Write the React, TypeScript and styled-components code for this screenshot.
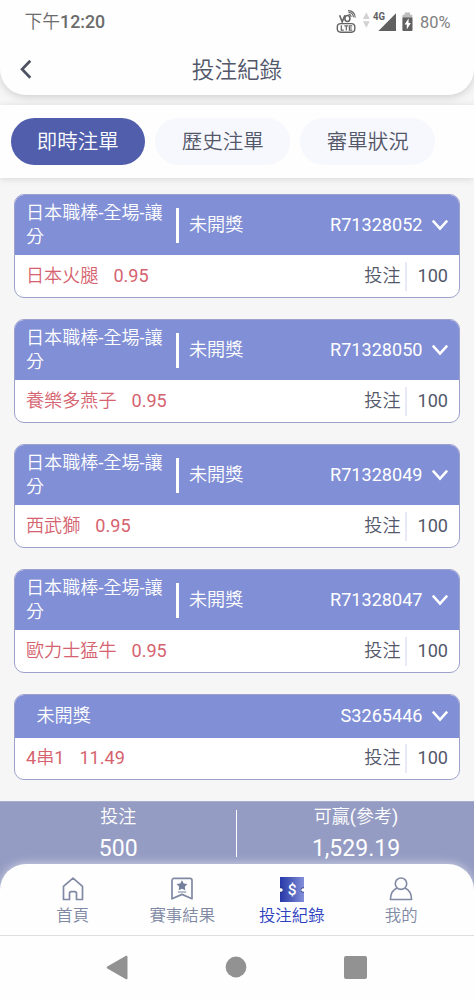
import React from 'react';
import styled, { createGlobalStyle } from 'styled-components';

const GlobalStyle = createGlobalStyle`
  * { box-sizing: border-box; }
  body {
    margin: 0;
    background: #f6f6f6;
    font-family: Roboto, 'Noto Sans CJK TC DemiLight', 'Noto Sans CJK TC', sans-serif;
    color: #53576a;
  }
`;

const Screen = styled.div`
  width: 100%;
  height: 1000px;
  display: flex;
  flex-direction: column;
  overflow: hidden;
`;

const Header = styled.header`
  flex: none;
  height: 95px;
  background: #fefefe;
  border-radius: 0 0 26px 26px;
  box-shadow: 0 2px 9px rgba(0, 0, 0, 0.16);
`;

const StatusBar = styled.div`
  height: 44px;
  padding: 0 23px 0 24.5px;
  display: flex;
  align-items: center;
  justify-content: space-between;
  color: #6b6b6b;
  font-size: 17px;
`;

const Clock = styled.span`
  display: flex;
  align-items: center;
  color: #6b6b6b;
  font-size: 17.8px;
  line-height: 24px;
  font-weight: 500;
  span { font-weight: 400; padding-bottom: 1px; }
`;

const StatusIcons = styled.div`
  display: flex;
  align-items: center;
`;

const Battery = styled.span`
  width: 31px;
  margin-left: 7px;
  font-size: 16.4px;
  color: #808080;
`;

const TitleBar = styled.div`
  height: 51px;
  display: grid;
  grid-template-columns: 52px 1fr 52px;
  align-items: center;
`;

const BackButton = styled.button`
  border: 0;
  padding: 0 0 0 18px;
  background: none;
  display: flex;
`;

const Title = styled.h1`
  margin: 0;
  padding-top: 2px;
  text-align: center;
  font-size: 22.6px;
  line-height: 32px;
  font-weight: 400;
`;

const Tabs = styled.nav`
  flex: none;
  height: 73px;
  margin-top: 10px;
  padding: 0 10.5px;
  display: flex;
  align-items: center;
  gap: 10.3px;
  background: #fefefe;
  box-shadow: 0 1px 7px rgba(0, 0, 0, 0.13);
`;

const Tab = styled.button<{ $active?: boolean }>`
  width: 134.7px;
  height: 47px;
  padding: 0 0 4px 0;
  border: 0;
  border-radius: 24px;
  font: inherit;
  font-size: 20.5px;
  background: ${(p) => (p.$active ? '#505eac' : '#f7f8fd')};
  color: ${(p) => (p.$active ? '#fff' : '#53576a')};
`;

const List = styled.main`
  flex: none;
  height: 623px;
  padding: 16px 14px 0;
  display: flex;
  flex-direction: column;
  gap: 21px;
`;

const Card = styled.article`
  flex: none;
  overflow: hidden;
  border: 1.5px solid #9ca2cb;
  border-radius: 10px;
  background: #fff;
  font-size: 18.1px;
`;

const CardHead = styled.div<{ $compact?: boolean }>`
  height: ${(p) => (p.$compact ? '42.5px' : '60px')};
  padding: 0 10px 0 ${(p) => (p.$compact ? '21.5px' : '11px')};
  display: flex;
  align-items: center;
  background: #818fd6;
  color: #fff;
`;

const League = styled.div`
  width: 150px;
  height: 49px;
  padding-right: 11px;
  line-height: 24.8px;
`;

const HeadRule = styled.div`
  width: 3px;
  height: 35px;
  margin-right: 10px;
  background: #fff;
`;

const Label = styled.span`
  line-height: 26px;
  padding-bottom: 1px;
`;

const OrderNo = styled.span`
  margin-left: auto;
  margin-right: 8.5px;
  padding-bottom: 1px;
`;

const CardBody = styled.div<{ $compact?: boolean }>`
  height: ${(p) => (p.$compact ? '41px' : '42px')};
  padding: 0 11px;
  display: flex;
  align-items: center;
`;

const Pick = styled(Label)`
  color: #d5636f;
  margin-right: 15px;
`;

const Odds = styled.span`
  flex: 1;
  padding-bottom: 1px;
  color: #d5636f;
`;

const Stake = styled.span`
  height: 29px;
  margin-left: 5px;
  padding-left: 10px;
  border-left: 2px solid #e8e9f8;
  line-height: 27px;
`;

const Summary = styled.section`
  flex: none;
  height: 92px;
  display: grid;
  grid-template-columns: 235.5px 1.5px 1fr;
  background: #959cc3;
  border-top: 1px solid #a7adca;
  color: #fff;
  text-align: center;
`;

const SummaryRule = styled.div`
  height: 47px;
  margin-top: 7.5px;
  background: #fff;
`;

const SummaryLabel = styled.div`
  padding-left: 1px;
  font-size: 18px;
  line-height: 29px;
`;

const SummaryValue = styled.div`
  padding: 1px 0 0 1px;
  font-size: 23px;
  line-height: 34px;
`;

const BottomNav = styled.nav`
  flex: none;
  height: 72px;
  margin-top: -29px;
  padding: 0 18px;
  display: grid;
  grid-template-columns: repeat(4, 1fr);
  background: #fefefe;
  border-bottom: 1.5px solid #dedede;
  border-radius: 26px 26px 0 0;
  box-shadow: 0 -1px 9px rgba(255, 255, 255, 0.5);
`;

const NavItem = styled.a<{ $active?: boolean }>`
  padding-top: 12px;
  display: flex;
  flex-direction: column;
  align-items: center;
  color: ${(p) => (p.$active ? '#2b3fbf' : '#8089a4')};
  font-size: 16.4px;
  line-height: 24px;
  svg { margin-bottom: 2px; }
`;

const SystemNav = styled.div`
  flex: 1;
  display: flex;
  align-items: center;
  justify-content: space-between;
  padding: 0 107px 2px 106px;
  background: #fefefe;
`;

const Chevron = () => (
  <svg width="18" height="12" viewBox="0 0 18 12" fill="none" stroke="#fff" strokeWidth="2.5">
    <path d="M1.8 1.7 9 9.6l7.2-7.9" />
  </svg>
);

const StatusGlyphs = () => (
  <svg width="77" height="28" viewBox="336 8 77 28" fill="none">
    <path d="m339.6 15.2 2.6 6.6 2.7-6.6" stroke="#656565" strokeWidth="1.6" />
    <ellipse cx="347.4" cy="18.5" rx="2.5" ry="3" stroke="#656565" strokeWidth="1.6" />
    <path d="M348.6 14.1c1.5.3 2.4 1.2 2.7 2.7M348.5 12.3c2.9.3 4.7 2 5 4.9M348.1 10.6c4.2.2 6.9 2.7 7.2 7" stroke="#656565" strokeWidth="1.1" />
    <rect x="337.3" y="23.6" width="17.5" height="8.6" rx="3.4" stroke="#656565" strokeWidth="1.4" />
    <path d="M341.3 25.2v5h2.4M344.4 25.8h3.8m-1.9 0v4.8M352.2 25.8h-2.8v4.4h2.8M349.4 28h2.5" stroke="#656565" strokeWidth="1.2" />
    <path d="m366.3 12.3 3.4 6.7h-6.8zM366.3 27.7l3.4-6.5h-6.8z" fill="#d2d2d2" />
    <text x="373" y="20.4" fill="#606060" fontFamily="Roboto" fontSize="11.5" fontWeight="700" textLength="12" lengthAdjust="spacingAndGlyphs">4G</text>
    <path d="M396 13.3V31h-17.6z" fill="#606060" />
    <path d="M402.5 16v-1.2h2.2v-2.2h5.4v2.2h2.2V18h-9.8z" fill="#bdbdbd" />
    <path d="M402.4 17.6h10.1v12.5a1 1 0 0 1-1 1h-8.1a1 1 0 0 1-1-1z" fill="#606060" />
    <path d="m408.6 18.2-4 6.2h2.2v5l4-6.3h-2.2z" fill="#fff" />
  </svg>
);

const HomeIcon = () => (
  <svg width="24" height="26" viewBox="0 0 24 26" fill="none" stroke="#8089a4" strokeWidth="1.7" strokeLinejoin="round">
    <path d="M2.5 10.3 12 2.1l9.5 8.2v13.2h-6v-6.2c0-1-.7-1.7-1.7-1.7h-3.6c-1 0-1.7.7-1.7 1.7v6.2h-6z" />
  </svg>
);

const ResultIcon = () => (
  <svg width="24" height="26" viewBox="0 0 24 26" fill="none" stroke="#8089a4" strokeWidth="1.7" strokeLinejoin="round">
    <path d="M4 2.4h16a2 2 0 0 1 2 2v18.4L12 18.4 2 22.8V4.4a2 2 0 0 1 2-2z" />
    <path d="m12 4.3 1.7 3.2 3.6.6-2.5 2.6.5 3.6-3.3-1.6-3.3 1.6.5-3.6L6.7 8.1l3.6-.6z" fill="#737d9c" stroke="none" />
    <path d="M7.8 16h8.4" strokeWidth="1.1" />
  </svg>
);

const TicketIcon = () => (
  <svg width="24" height="26" viewBox="0 0 24 26">
    <defs>
      <linearGradient id="ticket" x1="0" x2="1" y1="0" y2="0">
        <stop offset="0" stopColor="#2739a9" />
        <stop offset=".45" stopColor="#4c5dbb" />
        <stop offset="1" stopColor="#8490da" />
      </linearGradient>
    </defs>
    <path d="M0 1h24v25H0z" fill="url(#ticket)" />
    <path d="M0 11.4h1.6l1.5 1.2v2.9l-1.5 1.1H0zM24 11.4h-1.6l-1.5 1.2v2.9l1.5 1.1H24z" fill="#273374" />
    <path d="M0 12.3h1.1a1.7 1.7 0 0 1 0 3.4H0zM24 12.3h-1.1a1.7 1.7 0 0 0 0 3.4H24z" fill="#fff" />
    <text x="12.2" y="18.9" textAnchor="middle" fill="#fff" fontFamily="Roboto" fontSize="15.5" fontWeight="500">$</text>
  </svg>
);

const UserIcon = () => (
  <svg width="24" height="26" viewBox="0 0 24 26" fill="none" stroke="#8089a4" strokeWidth="1.6" strokeLinejoin="round">
    <circle cx="12" cy="7.7" r="5.7" />
    <path d="M8.2 12.1c-4 1.5-6.5 5.6-6.8 11.4h21.2c-.3-5.8-2.8-9.9-6.8-11.4" />
  </svg>
);

interface Bet {
  id: string;
  pick: string;
  odds: string;
  parlay?: boolean;
}

const bets: Bet[] = [
  { id: 'R71328052', pick: '日本火腿', odds: '0.95' },
  { id: 'R71328050', pick: '養樂多燕子', odds: '0.95' },
  { id: 'R71328049', pick: '西武獅', odds: '0.95' },
  { id: 'R71328047', pick: '歐力士猛牛', odds: '0.95' },
  { id: 'S3265446', pick: '4串1', odds: '11.49', parlay: true },
];

const BetCard = ({ bet }: { bet: Bet }) => (
  <Card>
    <CardHead $compact={bet.parlay}>
      {!bet.parlay && (
        <>
          <League>日本職棒-全場-讓分</League>
          <HeadRule />
        </>
      )}
      <Label>未開獎</Label>
      <OrderNo>{bet.id}</OrderNo>
      <Chevron />
    </CardHead>
    <CardBody $compact={bet.parlay}>
      <Pick>{bet.pick}</Pick>
      <Odds>{bet.odds}</Odds>
      <Label>投注</Label>
      <Stake>100</Stake>
    </CardBody>
  </Card>
);

export default function App() {
  return (
    <Screen>
      <GlobalStyle />
      <Header>
        <StatusBar>
          <Clock><span>下午</span>12:20</Clock>
          <StatusIcons>
            <StatusGlyphs />
            <Battery>80%</Battery>
          </StatusIcons>
        </StatusBar>
        <TitleBar>
          <BackButton aria-label="返回">
            <svg width="15" height="22" viewBox="0 0 15 22" fill="none" stroke="#4e5263" strokeWidth="2.7">
              <path d="M12.3 1.8 4.1 10.3l8.2 8.5" />
            </svg>
          </BackButton>
          <Title>投注紀錄</Title>
        </TitleBar>
      </Header>
      <Tabs>
        <Tab $active>即時注單</Tab>
        <Tab>歷史注單</Tab>
        <Tab>審單狀況</Tab>
      </Tabs>
      <List>
        {bets.map((bet) => <BetCard key={bet.id} bet={bet} />)}
      </List>
      <Summary>
        <div>
          <SummaryLabel>投注</SummaryLabel>
          <SummaryValue>500</SummaryValue>
        </div>
        <SummaryRule />
        <div>
          <SummaryLabel>可贏(參考)</SummaryLabel>
          <SummaryValue>1,529.19</SummaryValue>
        </div>
      </Summary>
      <BottomNav>
        <NavItem><HomeIcon />首頁</NavItem>
        <NavItem><ResultIcon />賽事結果</NavItem>
        <NavItem $active><TicketIcon />投注紀錄</NavItem>
        <NavItem><UserIcon />我的</NavItem>
      </BottomNav>
      <SystemNav>
        <svg width="22" height="25" viewBox="0 0 22 25" fill="#929292">
          <path d="M1.3 11.6 20 .8c.8-.4 1.5 0 1.5.9v21.6c0 .9-.7 1.3-1.5.9L1.3 13.4c-.8-.5-.8-1.3 0-1.8z" />
        </svg>
        <svg width="22" height="22" viewBox="0 0 22 22" fill="#929292">
          <circle cx="11" cy="11" r="10.4" />
        </svg>
        <svg width="23" height="23" viewBox="0 0 23 23" fill="#929292">
          <rect width="23" height="23" rx="2" />
        </svg>
      </SystemNav>
    </Screen>
  );
}
